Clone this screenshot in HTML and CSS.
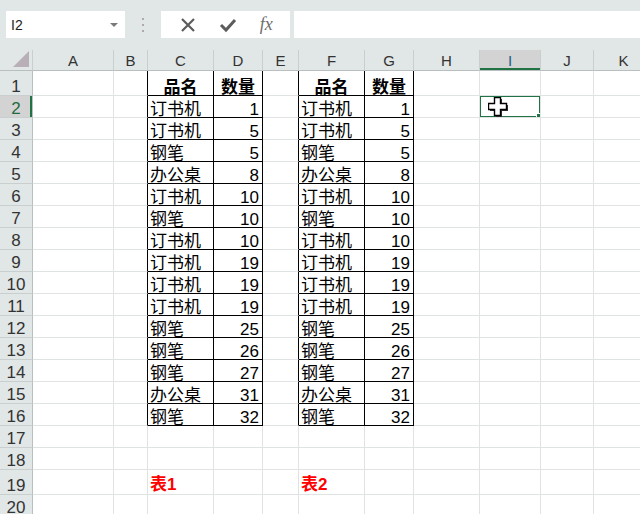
FILE: index.html
```html
<!DOCTYPE html>
<html lang="zh-CN">
<head>
    <meta charset="UTF-8">
    <title>Sheet1 - Excel</title>
    <link rel="stylesheet" href="styles.css">
</head>
<body>
    <div class="toolbar">
        <div class="namebox">
            <span>I2</span>
            <span class="drop"></span>
        </div>
        <div class="grip">
            <svg width="4" height="16" viewBox="0 0 4 16"><rect x="1" y="1" width="2" height="2"/><rect x="1" y="7" width="2" height="2"/><rect x="1" y="13" width="2" height="2"/></svg>
        </div>
        <div class="fbtns">
            <svg class="ico" width="16" height="16" viewBox="0 0 16 16"><path d="M2 2 L14 14 M14 2 L2 14"/></svg>
            <svg class="ico chk" width="18" height="16" viewBox="0 0 18 16"><path d="M2 8 L7 13 L16 3"/></svg>
            <span class="fx">fx</span>
        </div>
        <div class="formula"></div>
    </div>

    <table class="sheet">
        <colgroup>
            <col style="width:33px"><col style="width:81px"><col style="width:34px"><col style="width:66px">
            <col style="width:49px"><col style="width:36px"><col style="width:66px"><col style="width:49px">
            <col style="width:66px"><col style="width:61px"><col style="width:53px"><col style="width:60px">
        </colgroup>
        <tr class="hdr">
            <th class="corner"><span class="tri"></span></th>
            <th>A</th><th>B</th><th>C</th><th>D</th><th>E</th><th>F</th><th>G</th><th>H</th><th class="sel">I</th><th>J</th><th>K</th>
        </tr>
        <tr class="tall">
            <td class="rh">1</td><td></td><td class="e"></td><td class="h">品名</td><td class="h">数量</td><td class="e"></td><td class="h">品名</td><td class="h">数量</td><td></td><td></td><td></td><td></td>
        </tr>
        <tr>
            <td class="rh sel">2</td><td></td><td class="e"></td><td class="t">订书机</td><td class="n">1</td><td class="e"></td><td class="t">订书机</td><td class="n">1</td><td></td>
            <td class="cur">
                <div class="selbox"></div>
                <svg class="pointer" width="21" height="21" viewBox="0 0 21 21">
                    <path class="shade" d="M8 2 H14 V8 H20 V14 H14 V20 H8 V14 H2 V8 H8 Z"/>
                    <path class="plus" d="M6.5 0.5 H12.5 V6.5 H18.5 V12.5 H12.5 V18.5 H6.5 V12.5 H0.5 V6.5 H6.5 Z"/>
                </svg>
            </td>
            <td></td><td></td>
        </tr>
        <tr>
            <td class="rh">3</td><td></td><td class="e"></td><td class="t">订书机</td><td class="n">5</td><td class="e"></td><td class="t">订书机</td><td class="n">5</td><td></td><td></td><td></td><td></td>
        </tr>
        <tr>
            <td class="rh">4</td><td></td><td class="e"></td><td class="t">钢笔</td><td class="n">5</td><td class="e"></td><td class="t">钢笔</td><td class="n">5</td><td></td><td></td><td></td><td></td>
        </tr>
        <tr>
            <td class="rh">5</td><td></td><td class="e"></td><td class="t">办公桌</td><td class="n">8</td><td class="e"></td><td class="t">办公桌</td><td class="n">8</td><td></td><td></td><td></td><td></td>
        </tr>
        <tr>
            <td class="rh">6</td><td></td><td class="e"></td><td class="t">订书机</td><td class="n">10</td><td class="e"></td><td class="t">订书机</td><td class="n">10</td><td></td><td></td><td></td><td></td>
        </tr>
        <tr>
            <td class="rh">7</td><td></td><td class="e"></td><td class="t">钢笔</td><td class="n">10</td><td class="e"></td><td class="t">钢笔</td><td class="n">10</td><td></td><td></td><td></td><td></td>
        </tr>
        <tr>
            <td class="rh">8</td><td></td><td class="e"></td><td class="t">订书机</td><td class="n">10</td><td class="e"></td><td class="t">订书机</td><td class="n">10</td><td></td><td></td><td></td><td></td>
        </tr>
        <tr>
            <td class="rh">9</td><td></td><td class="e"></td><td class="t">订书机</td><td class="n">19</td><td class="e"></td><td class="t">订书机</td><td class="n">19</td><td></td><td></td><td></td><td></td>
        </tr>
        <tr>
            <td class="rh">10</td><td></td><td class="e"></td><td class="t">订书机</td><td class="n">19</td><td class="e"></td><td class="t">订书机</td><td class="n">19</td><td></td><td></td><td></td><td></td>
        </tr>
        <tr>
            <td class="rh">11</td><td></td><td class="e"></td><td class="t">订书机</td><td class="n">19</td><td class="e"></td><td class="t">订书机</td><td class="n">19</td><td></td><td></td><td></td><td></td>
        </tr>
        <tr>
            <td class="rh">12</td><td></td><td class="e"></td><td class="t">钢笔</td><td class="n">25</td><td class="e"></td><td class="t">钢笔</td><td class="n">25</td><td></td><td></td><td></td><td></td>
        </tr>
        <tr>
            <td class="rh">13</td><td></td><td class="e"></td><td class="t">钢笔</td><td class="n">26</td><td class="e"></td><td class="t">钢笔</td><td class="n">26</td><td></td><td></td><td></td><td></td>
        </tr>
        <tr>
            <td class="rh">14</td><td></td><td class="e"></td><td class="t">钢笔</td><td class="n">27</td><td class="e"></td><td class="t">钢笔</td><td class="n">27</td><td></td><td></td><td></td><td></td>
        </tr>
        <tr>
            <td class="rh">15</td><td></td><td class="e"></td><td class="t">办公桌</td><td class="n">31</td><td class="e"></td><td class="t">办公桌</td><td class="n">31</td><td></td><td></td><td></td><td></td>
        </tr>
        <tr>
            <td class="rh">16</td><td></td><td class="e"></td><td class="t">钢笔</td><td class="n">32</td><td class="e"></td><td class="t">钢笔</td><td class="n">32</td><td></td><td></td><td></td><td></td>
        </tr>
        <tr>
            <td class="rh">17</td><td></td><td></td><td></td><td></td><td></td><td></td><td></td><td></td><td></td><td></td><td></td>
        </tr>
        <tr>
            <td class="rh">18</td><td></td><td></td><td></td><td></td><td></td><td></td><td></td><td></td><td></td><td></td><td></td>
        </tr>
        <tr class="tall">
            <td class="rh">19</td><td></td><td></td><td class="cap">表1</td><td></td><td></td><td class="cap">表2</td><td></td><td></td><td></td><td></td><td></td>
        </tr>
        <tr>
            <td class="rh">20</td><td></td><td></td><td></td><td></td><td></td><td></td><td></td><td></td><td></td><td></td><td></td>
        </tr>
    </table>
</body>
</html>
```

FILE: styles.css
```css
body {
    margin: 0;
    width: 640px;
    height: 514px;
    overflow: hidden;
    background-color: #fff;
    font-family: "Liberation Sans", "Noto Sans CJK SC", sans-serif;
    color: #000;
}

/* Formula bar */
.toolbar {
    display: flex;
    align-items: flex-start;
    height: 50px;
    padding: 11px 0 0 6px;
    box-sizing: border-box;
    background-color: #e1e6e6;
}
.namebox {
    width: 119px;
    height: 27px;
    box-sizing: border-box;
    padding: 0 7px 0 5px;
    display: flex;
    align-items: center;
    justify-content: space-between;
    background-color: #fff;
    font-size: 14px;
    color: #222;
}
.drop {
    width: 0;
    height: 0;
    border-left: 4px solid transparent;
    border-right: 4px solid transparent;
    border-top: 4px solid #7a7a7a;
}
.grip {
    width: 36px;
    height: 27px;
    display: flex;
    align-items: center;
    justify-content: center;
}
.grip svg {
    fill: #b0a8ae;
}
.fbtns {
    width: 129px;
    height: 27px;
    display: flex;
    align-items: center;
    justify-content: space-around;
    padding: 0 6px 0 8px;
    box-sizing: border-box;
    background-color: #fff;
}
.ico {
    fill: none;
    stroke: #5c5c5c;
    stroke-width: 2.2;
}
.ico.chk {
    stroke-width: 3;
}
.fx {
    font-family: "Liberation Serif", serif;
    font-style: italic;
    font-size: 18px;
    color: #6d6d6d;
}
.formula {
    flex: 1;
    height: 27px;
    margin-left: 4px;
    background-color: #fff;
}

/* Grid */
.sheet {
    border-collapse: separate;
    border-spacing: 0;
    table-layout: fixed;
    width: 654px;
}
.sheet th,
.sheet td {
    padding: 0;
    border-right: 1px solid #dfe3e3;
    border-bottom: 1px solid #dfe3e3;
    white-space: nowrap;
    overflow: hidden;
}
.sheet tr {
    height: 22px;
}
.sheet tr.hdr {
    height: 21px;
}
.sheet tr.tall {
    height: 25px;
}
.hdr th {
    background-color: #e1e6e6;
    border-right: 1px solid #c9cece;
    border-bottom: 1px solid #b9bfbf;
    font-weight: normal;
    font-size: 15px;
    color: #333;
    vertical-align: middle;
    text-align: center;
}
.hdr th.sel {
    background-color: #d3d3d3;
    box-shadow: inset 0 -2px 0 #217346;
    color: #1f5e8a;
}
.corner {
    position: relative;
}
.tri {
    position: absolute;
    right: 3px;
    bottom: 3px;
    width: 0;
    height: 0;
    border-left: 16px solid transparent;
    border-bottom: 16px solid #b8b0b6;
}
.rh {
    background-color: #e1e6e6;
    border-right: 1px solid #b9bfbf !important;
    border-bottom: 1px solid #c9cece !important;
    text-align: center;
    vertical-align: bottom;
    font-size: 17px;
    line-height: 15px;
    padding-bottom: 1px !important;
    color: #333;
}
.rh.sel {
    background-color: #d3d3d3;
    box-shadow: inset -2px 0 0 #217346;
    color: #1e6b41;
}

/* Data */
.sheet td.e {
    border-right-color: #000;
}
.sheet td.t,
.sheet td.n,
.sheet td.h {
    border-right-color: #000;
    border-bottom-color: #000;
    vertical-align: bottom;
    font-size: 17px;
    line-height: 15px;
}
.t {
    padding-left: 2px !important;
}
.n {
    text-align: right;
    padding-right: 3px !important;
}
.h {
    text-align: center;
    font-weight: bold;
}
.cap {
    vertical-align: bottom;
    padding-left: 2px !important;
    padding-bottom: 2px !important;
    font-size: 17px;
    line-height: 15px;
    font-weight: bold;
    color: #ff0000;
}

/* Active cell */
.cur {
    position: relative;
}
.selbox {
    position: absolute;
    left: -1px;
    top: -1px;
    right: -1px;
    bottom: -1px;
    border: 2px solid #217346;
}
.selbox::after {
    content: "";
    position: absolute;
    right: -4px;
    bottom: -4px;
    width: 5px;
    height: 5px;
    background-color: #217346;
    border: 1px solid #fff;
}
.pointer {
    position: absolute;
    left: 8px;
    top: 1px;
}
.pointer .shade {
    fill: #333;
}
.pointer .plus {
    fill: #fff;
    stroke: #000;
    stroke-width: 1.4;
}
```
